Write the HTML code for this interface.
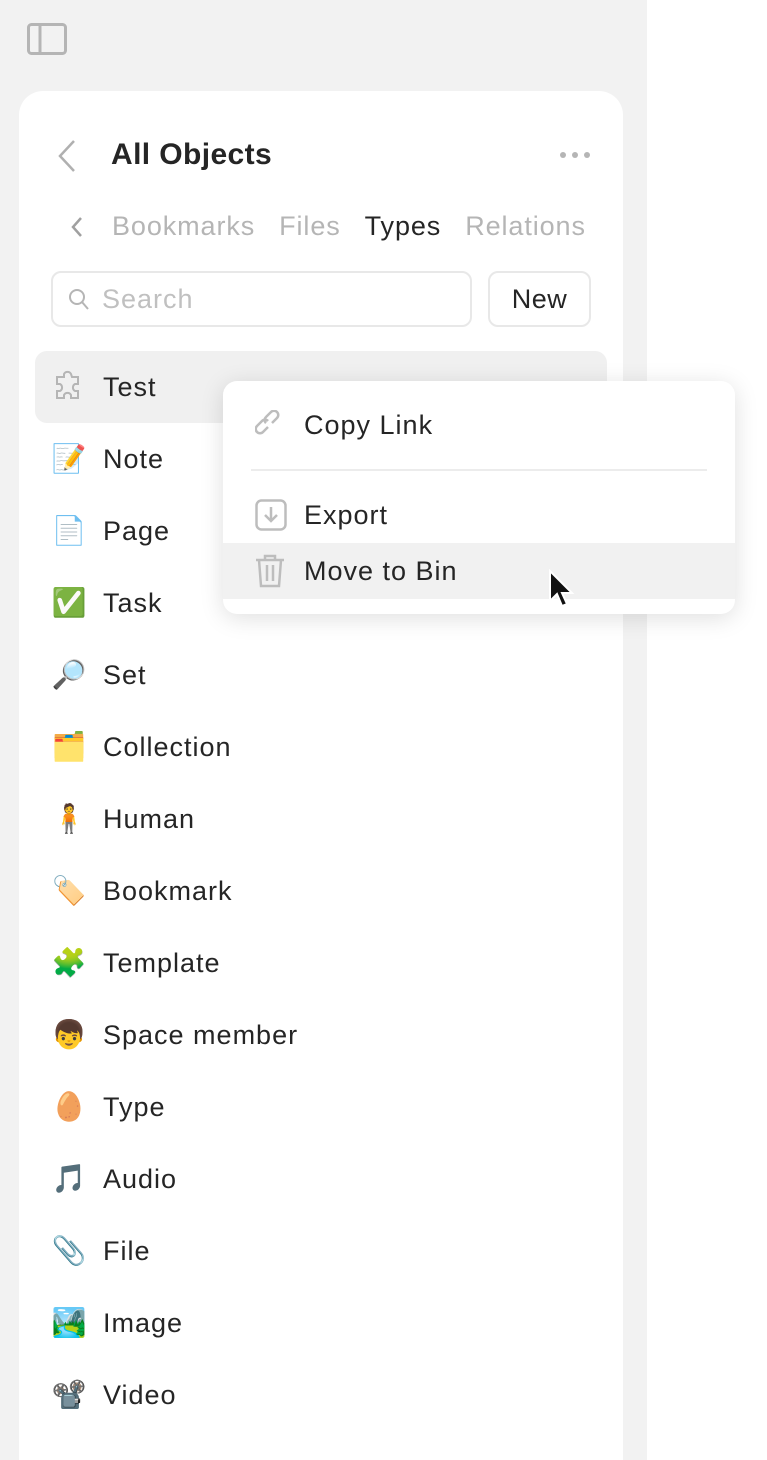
<!DOCTYPE html>
<html><head><meta charset="utf-8"><style>
*{margin:0;padding:0;box-sizing:border-box}
html,body{width:767px;height:1460px;overflow:hidden}
body{background:#fff;font-family:"Liberation Sans",sans-serif;color:#252525;position:relative}
.side{position:absolute;left:0;top:0;width:647px;height:1460px;background:#f2f2f2}
.panel{position:absolute;left:19px;top:91px;width:604px;height:1369px;background:#fff;border-radius:24px 24px 0 0}
.abs{position:absolute}
.item{position:absolute;left:16px;width:572px;height:72px;display:flex;align-items:center;font-size:27px;letter-spacing:1px}
.item .ic{width:36px;margin-left:16px;margin-right:16px;font-size:28px;text-align:center;line-height:1;letter-spacing:0}
.menu{position:absolute;left:223px;top:381px;width:512px;height:233px;background:#fff;border-radius:14px;box-shadow:0 4px 24px rgba(0,0,0,.13)}
.mi{position:absolute;left:0;width:512px;height:56px;display:flex;align-items:center;font-size:27px;letter-spacing:1px}
.mi svg{position:absolute;left:32px}
.mi span{position:absolute;left:81px}
</style></head><body>
<div class="side"></div>
<svg class="abs" style="left:27px;top:23px" width="40" height="32" viewBox="0 0 40 32"><rect x="1.5" y="1.5" width="37" height="29" rx="3" fill="none" stroke="#b5b5b5" stroke-width="3"/><line x1="13" y1="2" x2="13" y2="30" stroke="#b5b5b5" stroke-width="3"/></svg>
<div class="panel">
<svg class="abs" style="left:38px;top:48px" width="20" height="34" viewBox="0 0 20 34"><path d="M17 2L3 17l14 15" fill="none" stroke="#b0b0b0" stroke-width="2.5"/></svg>
<div class="abs" style="left:92px;top:47px;font-size:30px;font-weight:bold;letter-spacing:0.4px">All Objects</div>
<div class="abs" style="left:540px;top:55px;width:32px;height:8px">
<svg width="32" height="8"><circle cx="4" cy="4" r="3" fill="#b5b5b5"/><circle cx="16" cy="4" r="3" fill="#b5b5b5"/><circle cx="28" cy="4" r="3" fill="#b5b5b5"/></svg></div>
<svg class="abs" style="left:51px;top:125px" width="14" height="22" viewBox="0 0 14 22"><path d="M11 2L3 11l8 9" fill="none" stroke="#a0a0a0" stroke-width="2.5"/></svg>
<div class="abs" style="left:93px;top:120px;font-size:27px;letter-spacing:0.9px;color:#b5b5b5;white-space:nowrap">Bookmarks<span style="margin-left:24px">Files</span><span style="margin-left:24px;color:#252525">Types</span><span style="margin-left:24px">Relations</span></div>
<div class="abs" style="left:32px;top:180px;width:421px;height:56px;border:2px solid #e8e8e8;border-radius:10px"></div>
<svg class="abs" style="left:49px;top:197px" width="22" height="24" viewBox="0 0 22 24"><circle cx="9" cy="9" r="7" fill="none" stroke="#b5b5b5" stroke-width="2"/><path d="M14 14l6 7" stroke="#b5b5b5" stroke-width="2"/></svg>
<div class="abs" style="left:83px;top:193px;font-size:27px;letter-spacing:1px;color:#c0c0c0">Search</div>
<div class="abs" style="left:469px;top:180px;width:103px;height:56px;border:2px solid #e8e8e8;border-radius:10px;font-size:27px;letter-spacing:0.5px;text-align:center;line-height:52px">New</div>
<div class="item" style="top:260px;background:#f0f0f0;border-radius:12px"><span class="ic"><svg width="34" height="34" viewBox="0 0 34 34" fill="none" stroke="#b5b5b5" stroke-width="2"><path d="M12 6a4 4 0 0 1 7 0l1 3h6v7h-3a4 4 0 0 0 0 7h3v7h-7v-3a4 4 0 0 0-7 0v3H5v-7h3a4 4 0 0 0 0-7H5V9h7z"/></svg></span>Test</div>
<div class="item" style="top:332px"><span class="ic">📝</span>Note</div>
<div class="item" style="top:404px"><span class="ic">📄</span>Page</div>
<div class="item" style="top:476px"><span class="ic">✅</span>Task</div>
<div class="item" style="top:548px"><span class="ic">🔎</span>Set</div>
<div class="item" style="top:620px"><span class="ic">🗂️</span>Collection</div>
<div class="item" style="top:692px"><span class="ic">🧍</span>Human</div>
<div class="item" style="top:764px"><span class="ic">🏷️</span>Bookmark</div>
<div class="item" style="top:836px"><span class="ic">🧩</span>Template</div>
<div class="item" style="top:908px"><span class="ic">👦</span>Space member</div>
<div class="item" style="top:980px"><span class="ic">🥚</span>Type</div>
<div class="item" style="top:1052px"><span class="ic">🎵</span>Audio</div>
<div class="item" style="top:1124px"><span class="ic">📎</span>File</div>
<div class="item" style="top:1196px"><span class="ic">🏞️</span>Image</div>
<div class="item" style="top:1268px"><span class="ic">📽️</span>Video</div>
</div>
<div class="menu">
<div class="mi" style="top:16px"><svg width="30" height="30" viewBox="0 0 30 30" fill="none" stroke="#bdbdbd" stroke-width="2.5"><path d="M13 17l-5 5a4 4 0 0 1-6-6l5-5a4 4 0 0 1 6 0"/><path d="M17 13l5-5a4 4 0 0 0-6-6l-5 5a4 4 0 0 0 0 6"/></svg><span>Copy Link</span></div>
<div class="abs" style="left:28px;top:88px;width:456px;height:2px;background:#ececec"></div>
<div class="mi" style="top:106px"><svg width="32" height="32" viewBox="0 0 32 32" fill="none" stroke="#bdbdbd" stroke-width="2.5"><rect x="1.5" y="1.5" width="29" height="29" rx="5"/><path d="M16 8v14M10 16l6 6 6-6"/></svg><span>Export</span></div>
<div class="mi" style="top:162px;background:#f1f1f1"><svg width="30" height="34" viewBox="0 0 30 34" fill="none" stroke="#bdbdbd" stroke-width="2.5"><path d="M1 6h28M10 6V2h10v4M4 6l2 26h18l2-26M12 11v16M18 11v16"/></svg><span>Move to Bin</span>
<svg style="left:325px;top:26px" width="28" height="40" viewBox="0 0 28 40"><path d="M2 2v30l7-7 5 12 5-2-5-11h10z" fill="#111" stroke="#fff" stroke-width="2"/></svg></div>
</div>
</body></html>
